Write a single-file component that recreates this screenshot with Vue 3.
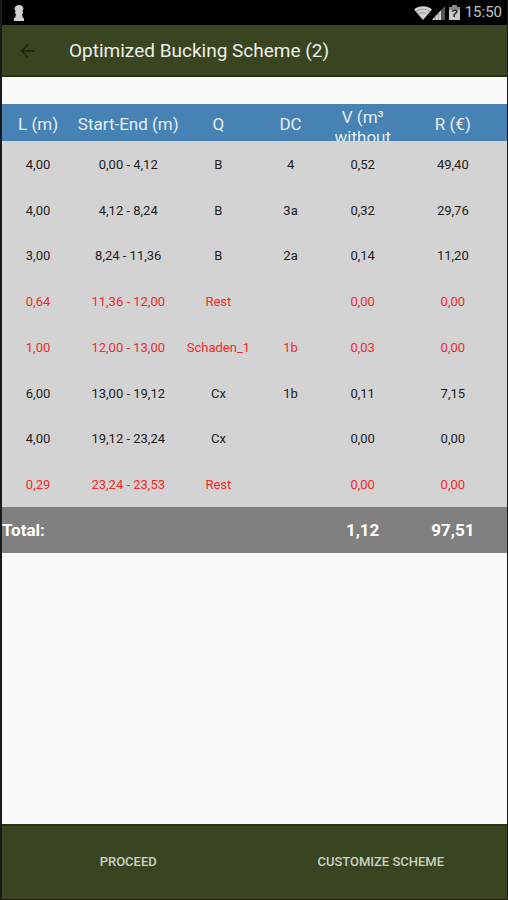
<script setup>
const columns = ['L (m)', 'Start-End (m)', 'Q', 'DC', 'V (m³ without', 'R (€)']

const rows = [
  { cells: ['4,00', '0,00 - 4,12', 'B', '4', '0,52', '49,40'] },
  { cells: ['4,00', '4,12 - 8,24', 'B', '3a', '0,32', '29,76'] },
  { cells: ['3,00', '8,24 - 11,36', 'B', '2a', '0,14', '11,20'] },
  { cells: ['0,64', '11,36 - 12,00', 'Rest', '', '0,00', '0,00'], waste: true },
  { cells: ['1,00', '12,00 - 13,00', 'Schaden_1', '1b', '0,03', '0,00'], waste: true },
  { cells: ['6,00', '13,00 - 19,12', 'Cx', '1b', '0,11', '7,15'] },
  { cells: ['4,00', '19,12 - 23,24', 'Cx', '', '0,00', '0,00'] },
  { cells: ['0,29', '23,24 - 23,53', 'Rest', '', '0,00', '0,00'], waste: true },
]
</script>

<template>
  <div class="screen">
    <div class="status">
      <svg class="keyhole" width="12" height="18" viewBox="0 0 12 18" aria-hidden="true">
        <path d="M6 1C3.600 1 1.600 2.500 1.600 4.600c0 1.100.4 1.900 1.100 2.600L1.900 8v1.300l1.200.7L2 14H1v3h10v-3h-1L8.900 10l1.200-.7V8l-.8-.8c.7-.7 1.100-1.500 1.100-2.600C10.400 2.500 8.400 1 6 1z" fill="#cfcfcf" />
      </svg>
      <div class="indicators">
        <svg width="18" height="14" viewBox="0 0 18 14" aria-hidden="true">
          <path d="M0 3.500C5 -.8 13 -.8 18 3.500L9 14z" fill="#d2d2d2" />
          <path d="M1.800 5.800C6 2.300 12 2.300 16.200 5.800M4.200 8.500c3-2.300 6.600-2.300 9.600 0" fill="none" stroke="#777" stroke-width=".7" />
        </svg>
        <svg width="13" height="14" viewBox="0 0 13 14" aria-hidden="true">
          <path d="M0 14L13 0v14z" fill="#555" />
          <path d="M0 14L9 4.300V14z" fill="#d2d2d2" />
          <path d="M3.500 9v5M6.500 6v8" stroke="#777" stroke-width=".6" />
        </svg>
        <svg class="battery" width="11" height="15" viewBox="0 0 11 15" aria-hidden="true">
          <path d="M3.500 0h4v2H11v13H0V2h3.500z" fill="#cacaca" />
          <path d="M0 2h3.500V0h4v2H11v3H0z" fill="#8b8b8b" />
          <path d="M3 6.500c2-2 5-1.500 5 .5L5.200 9.500V12" fill="none" stroke="#222" stroke-width="1.500" />
        </svg>
        <span class="clock">15:50</span>
      </div>
    </div>

    <header class="appbar">
      <button class="back" type="button" aria-label="Back">
        <svg width="16" height="16" viewBox="0 0 16 16" aria-hidden="true">
          <path d="M15 8H2M8 1.500L1.500 8 8 14.500" fill="none" stroke="#1d2610" stroke-width="1.500" />
        </svg>
      </button>
      <h1>Optimized Bucking Scheme (2)</h1>
    </header>

    <main>
      <table>
        <colgroup>
          <col class="narrow"><col class="wide"><col class="narrow">
          <col class="narrow"><col class="narrow"><col class="wide">
        </colgroup>
        <thead>
          <tr>
            <th v-for="name in columns" :key="name" scope="col">
              <div class="heading" :class="{ wrapped: name.startsWith('V') }">{{ name }}</div>
            </th>
          </tr>
        </thead>
        <tbody>
          <tr v-for="(row, i) in rows" :key="i" :class="{ waste: row.waste }">
            <td v-for="(cell, j) in row.cells" :key="j">{{ cell }}</td>
          </tr>
        </tbody>
        <tfoot>
          <tr>
            <th scope="row" colspan="4">Total:</th>
            <td>1,12</td>
            <td>97,51</td>
          </tr>
        </tfoot>
      </table>
    </main>

    <footer class="actions">
      <button type="button">PROCEED</button>
      <button type="button">CUSTOMIZE SCHEME</button>
    </footer>
  </div>
</template>

<style>
body {
  margin: 0;
  background: #18191b;
}
</style>

<style scoped>
.screen {
  box-sizing: border-box;
  min-height: 100vh;
  display: flex;
  flex-direction: column;
  border: solid #18191b;
  border-width: 0 1px 1px 2px;
  background: #fafafa;
  font-family: Roboto, "Liberation Sans", sans-serif;
}

.status {
  height: 25px;
  display: flex;
  align-items: center;
  justify-content: space-between;
  padding: 0 5px 0 11px;
  background: #000;
}

.indicators {
  display: flex;
  align-items: center;
}

.battery {
  margin: 0 5px 0 4px;
}

.clock {
  font-size: 15px;
  line-height: 27px;
  color: #c4c4c4;
}

.appbar {
  height: 52px;
  display: flex;
  align-items: center;
  gap: 25px;
  padding-left: 10px;
  box-shadow: inset 0 -2px #263310;
  background: #394420;
}

.back {
  display: grid;
  place-items: center;
  width: 32px;
  height: 32px;
  padding: 0;
  border: 0;
  background: none;
}

h1 {
  margin: 0;
  font-size: 19px;
  font-weight: 400;
  line-height: 28px;
  color: #edf0e8;
}

main {
  flex: 1;
  padding-top: 27px;
}

table {
  width: 100%;
  table-layout: fixed;
  border-collapse: collapse;
  text-align: center;
}

.narrow {
  width: 14.285%;
}

.wide {
  width: 21.43%;
}

th,
td {
  padding: 0;
}

thead {
  background: #4682b4;
  color: #e6eef6;
}

thead th {
  font-size: 17px;
  font-weight: 400;
  line-height: 20px;
}

.heading {
  box-sizing: border-box;
  height: 37px;
  display: grid;
  align-content: center;
  padding-top: 2px;
  overflow: hidden;
}

.wrapped {
  padding: 3px 8px 0;
  align-content: start;
}

tbody {
  background: #d3d3d3;
  color: #1c1c1c;
  font-size: 13px;
}

tbody tr {
  height: 46px;
}

tbody tr:nth-child(4n + 3) {
  height: 45px;
}

.waste {
  color: #f22a2a;
}

tfoot {
  background: #808080;
  color: #fff;
  font-size: 17px;
}

tfoot tr {
  height: 46px;
}

tfoot th,
tfoot td {
  font-weight: 700;
}

tfoot th {
  text-align: left;
}

.actions {
  display: flex;
  box-shadow: inset 0 2px #263310;
  background: #394420;
}

.actions button {
  flex: 1;
  height: 75px;
  padding: 0;
  border: 0;
  background: none;
  font-family: inherit;
  font-size: 13px;
  font-weight: 500;
  color: #cdd3c4;
}
</style>
